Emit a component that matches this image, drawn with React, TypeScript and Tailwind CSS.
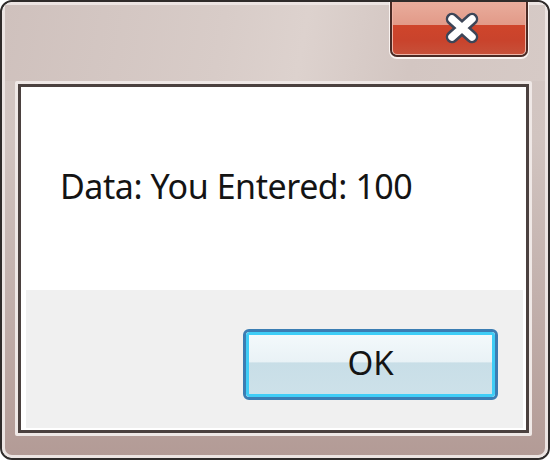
import React from "react";

function CloseGlyph() {
  return (
    <svg width="38" height="32" viewBox="0 0 38 32">
      <g strokeLinecap="round" fill="none">
        <path d="M9 7 L29 25 M29 7 L9 25" stroke="#3d4658" strokeWidth="12.5" />
        <path d="M9 7 L29 25 M29 7 L9 25" stroke="#ffffff" strokeWidth="7.5" />
      </g>
    </svg>
  );
}

export default function App() {
  const font = { fontFamily: '"Noto Sans", "Open Sans", "DejaVu Sans", sans-serif' };
  return (
    <div className="w-[550px] h-[460px] bg-white" style={font}>
      <div className="h-full rounded-[12px] border-2 border-[#2f2b2a] overflow-hidden">
        <div className="h-full rounded-[10px] border-[3px] border-[#ece4e2] flex flex-col bg-[linear-gradient(180deg,#d4c8c4_0%,#d1c4c0_30%,#c2b0ac_65%,#b39b96_100%)]">
          <div className="h-[76px] shrink-0 flex justify-end items-start pr-[17px] bg-[linear-gradient(100deg,#cfc1bd_0%,#d8ccc8_40%,#ddd2ce_55%,#d3c6c2_75%,#d6cac6_100%)]">
            <div className="-mt-[5px] w-[138px] h-[57px] rounded-b-[7px] border-2 border-t-0 border-[#4a2a24] shadow-[0_1px_0_1px_rgba(255,250,248,0.85)] overflow-hidden">
              <div className="h-full flex items-center justify-center pl-[6px] pt-[1px] rounded-b-[5px] border border-t-0 border-[#f0b4a6] bg-[linear-gradient(180deg,#eaae9e_0%,#e29a88_46%,#cf452b_47%,#c9432c_75%,#c75039_100%)]">
                <CloseGlyph />
              </div>
            </div>
          </div>
          <div className="flex-1 ml-[10px] mr-[13px] mb-[19px] border-[3px] border-[#efe8e6] rounded-[2px]">
            <div className="h-full border-[3px] border-[#4b413f] flex flex-col bg-white">
              <div className="h-[203px] shrink-0 flex items-start pt-[79px] pl-[39px]">
                <span className="text-[34px] leading-[40px] text-[#141414] tracking-[-0.45px]">
                  Data: You Entered: 100
                </span>
              </div>
              <div className="flex-1 ml-[5px] mr-[3px] mb-[2px] bg-[#f0f0f0] flex justify-end items-start pt-[39px] pr-[25px]">
                <div className="w-[255px] h-[71px] rounded-[6px] border-[3px] border-[#3b7db3] overflow-hidden">
                  <div className="h-full rounded-[3px] border-[3px] border-[#3fcdf6] overflow-hidden">
                    <div className="h-full flex items-center justify-center bg-[linear-gradient(180deg,#f3f9fb_0%,#e9f2f6_46%,#c8dee7_47%,#cde1e9_100%)]">
                      <span className="text-[33px] leading-none text-[#141414] -mt-[4px]">OK</span>
                    </div>
                  </div>
                </div>
              </div>
            </div>
          </div>
        </div>
      </div>
    </div>
  );
}
